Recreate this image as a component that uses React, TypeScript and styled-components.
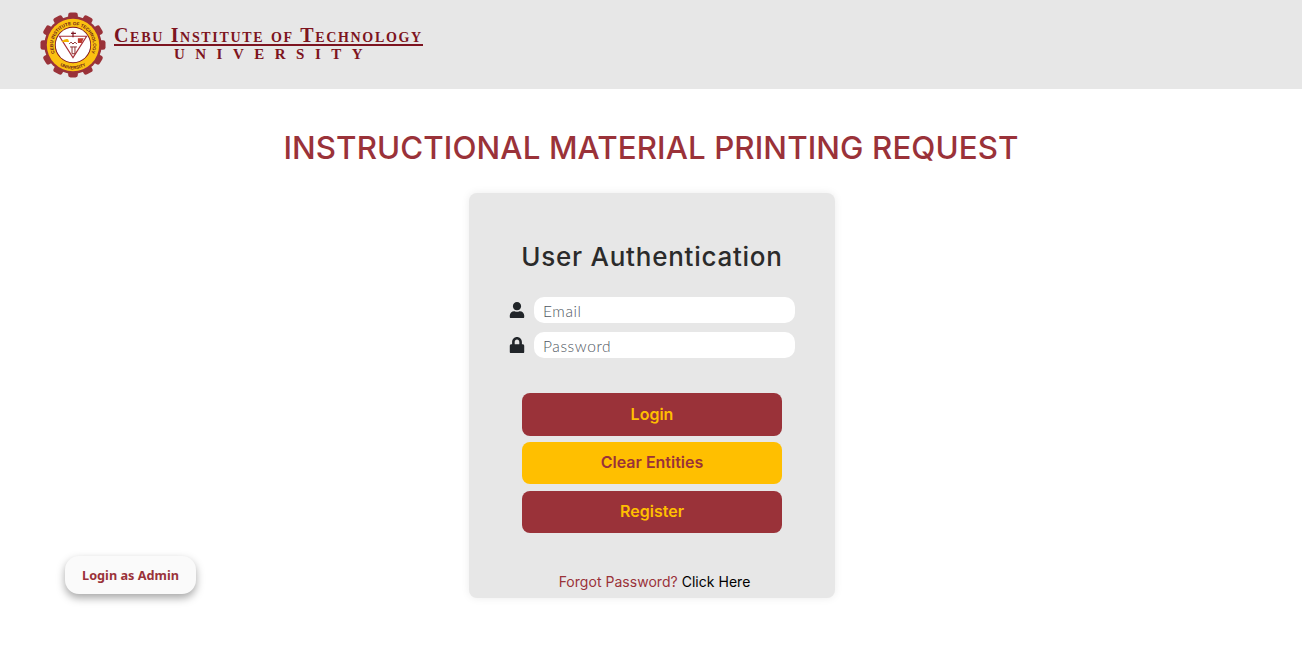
import React from 'react';
import styled, { createGlobalStyle } from 'styled-components';
import { FaUser, FaLock } from 'react-icons/fa';

const MAROON = '#9a3239';
const LOGO_RED = '#7d1420';
const GOLD = '#ffbf00';
const PANEL = '#e7e7e7';

const GlobalStyle = createGlobalStyle`
  html, body {
    margin: 0;
    padding: 0;
    background: #fff;
    font-family: 'Inter', 'Liberation Sans', sans-serif;
  }
`;

const Page = styled.div`
  position: relative;
  width: 100%;
  height: 646px;
  overflow: hidden;
`;

const Header = styled.header`
  display: flex;
  align-items: center;
  gap: 8px;
  height: 89px;
  padding-left: 40px;
  box-sizing: border-box;
  background: ${PANEL};
`;

const Wordmark = styled.div`
  display: flex;
  flex-direction: column;
  align-items: stretch;
  width: 309px;
  margin-top: -2px;
  color: ${LOGO_RED};
  font-family: 'Liberation Serif', serif;
  font-weight: 700;
`;

const WordmarkTop = styled.div`
  font-size: 20px;
  line-height: 18px;
  font-variant: small-caps;
  letter-spacing: 1.68px;
  white-space: nowrap;
  border-bottom: 2px solid ${LOGO_RED};
`;

const WordmarkBottom = styled.div`
  font-size: 15px;
  line-height: 15px;
  margin-top: 1px;
  letter-spacing: 10.5px;
  text-align: center;
  white-space: nowrap;
  padding-left: 10px;
`;

const Main = styled.main`
  display: flex;
  flex-direction: column;
  align-items: center;
`;

const Title = styled.h1`
  margin: 37px 0 0;
  font-size: 31.3px;
  line-height: 44px;
  font-weight: 500;
  letter-spacing: 0.1px;
  color: ${MAROON};
  white-space: nowrap;
`;

const Card = styled.section`
  display: flex;
  flex-direction: column;
  align-items: center;
  width: 366px;
  height: 405px;
  margin: 23px 0 0 2px;
  box-sizing: border-box;
  padding-top: 46px;
  background: ${PANEL};
  border-radius: 8px;
  box-shadow: 0 0 8px rgba(0, 0, 0, 0.08);
`;

const CardTitle = styled.h2`
  margin: 0;
  font-size: 26px;
  line-height: 36px;
  font-weight: 500;
  color: #2b2b2b;
  letter-spacing: 0.75px;
`;

const Fields = styled.div`
  display: flex;
  flex-direction: column;
  gap: 9px;
  margin-top: 22px;
`;

const FieldRow = styled.label`
  display: flex;
  align-items: center;
  gap: 9px;
  color: #212529;
  font-size: 16.5px;
`;

const FieldIcon = styled.span`
  display: flex;
  justify-content: center;
  width: 16px;
`;

const Input = styled.input`
  width: 261px;
  height: 26px;
  box-sizing: border-box;
  padding: 1px 9px 0;
  border: none;
  outline: none;
  border-radius: 10px;
  background: #fff;
  font-family: 'Lato', sans-serif;
  font-weight: 300;
  font-size: 15.5px;
  letter-spacing: 0.6px;

  &::placeholder {
    color: #4f5762;
    opacity: 1;
  }
`;

const Actions = styled.div`
  display: flex;
  flex-direction: column;
  gap: 6.4px;
  margin-top: 35px;
`;

const ActionButton = styled.button<{ $accent?: boolean; $tall?: boolean }>`
  width: 260px;
  height: ${(p) => (p.$tall ? 43 : 42)}px;
  padding: 0 0 2px;
  border: none;
  border-radius: 8px;
  background: ${(p) => (p.$accent ? GOLD : MAROON)};
  color: ${(p) => (p.$accent ? MAROON : GOLD)};
  font-family: 'Inter', sans-serif;
  font-size: 16px;
  font-weight: 600;
`;

const ForgotLine = styled.p`
  margin: 39px 0 0 5px;
  font-size: 14px;
  line-height: 20px;
  color: ${MAROON};
  font-weight: 400;
  letter-spacing: 0.03px;
`;

const ClickHere = styled.a`
  color: #000;
`;

const AdminButton = styled.button`
  position: absolute;
  left: 65px;
  top: 556px;
  width: 131px;
  height: 38px;
  border: none;
  border-radius: 14px;
  background: #fafafa;
  color: ${MAROON};
  font-family: 'Noto Sans', 'Open Sans', sans-serif;
  font-size: 12.7px;
  font-weight: 700;
  box-shadow: 0 4px 8px rgba(0, 0, 0, 0.35);
`;

// teeth of the gear around the seal
const gearTeeth = Array.from({ length: 12 }, (_, i) => i * 30);

const Seal: React.FC = () => (
  <svg width="66" height="68" viewBox="0 0 68 68" aria-label="CIT University seal">
    <defs>
      <path id="sealTop" d="M 18.3 47.2 A 20.5 20.5 0 1 1 49.7 47.2" />
      <path id="sealBottom" d="M 13.5 48.3 A 25 25 0 0 0 54.5 48.3" />
    </defs>
    {gearTeeth.map((deg) => (
      <rect key={deg} x="29" y="0.5" width="10" height="8" rx="2.5" fill="#9a3239" transform={`rotate(${deg} 34 34)`} />
    ))}
    <circle cx="34" cy="34" r="29.5" fill="#9a3239" />
    <circle cx="34" cy="34" r="27" fill="#fbc111" />
    <circle cx="34" cy="34" r="18.7" fill="#7d1420" />
    <circle cx="34" cy="34" r="17.8" fill="#fff" />
    <text fontSize="4.7" fontWeight="700" fill="#6b1a1a" fontFamily="Liberation Sans, sans-serif">
      <textPath href="#sealTop" startOffset="50%" textAnchor="middle">CEBU INSTITUTE OF TECHNOLOGY</textPath>
    </text>
    <text fontSize="4.7" fontWeight="700" fill="#6b1a1a" fontFamily="Liberation Sans, sans-serif">
      <textPath href="#sealBottom" startOffset="50%" textAnchor="middle">UNIVERSITY</textPath>
    </text>
    <path d="M20 25 H48 L34 47 Z" fill="none" stroke="#a8323a" strokeWidth="1.2" />
    <path d="M22 31 q3 -4 7 -3 l1 3 h-8 z" fill="#f5b400" />
    <path d="M39 27 h6 l-2 5 h-4 z" fill="#c0392b" />
    <path d="M32 22 h5 M34 20 v6" stroke="#7d1420" strokeWidth="1.2" fill="none" />
    <path d="M30 33 l2 -2 l2 2 l2 -2 l2 2 M31 36 h7 M33 36 v7 h3 v-7" stroke="#8a2a2a" strokeWidth="1" fill="none" />
  </svg>
);

const App: React.FC = () => (
  <Page>
    <GlobalStyle />
    <Header>
      <Seal />
      <Wordmark>
        <WordmarkTop>Cebu Institute of Technology</WordmarkTop>
        <WordmarkBottom>UNIVERSITY</WordmarkBottom>
      </Wordmark>
    </Header>
    <Main>
      <Title>INSTRUCTIONAL MATERIAL PRINTING REQUEST</Title>
      <Card>
        <CardTitle>User Authentication</CardTitle>
        <Fields>
          <FieldRow>
            <FieldIcon><FaUser /></FieldIcon>
            <Input type="email" placeholder="Email" />
          </FieldRow>
          <FieldRow>
            <FieldIcon><FaLock /></FieldIcon>
            <Input type="password" placeholder="Password" />
          </FieldRow>
        </Fields>
        <Actions>
          <ActionButton $tall>Login</ActionButton>
          <ActionButton $accent>Clear Entities</ActionButton>
          <ActionButton>Register</ActionButton>
        </Actions>
        <ForgotLine>
          Forgot Password? <ClickHere>Click Here</ClickHere>
        </ForgotLine>
      </Card>
    </Main>
    <AdminButton>Login as Admin</AdminButton>
  </Page>
);

export default App;
